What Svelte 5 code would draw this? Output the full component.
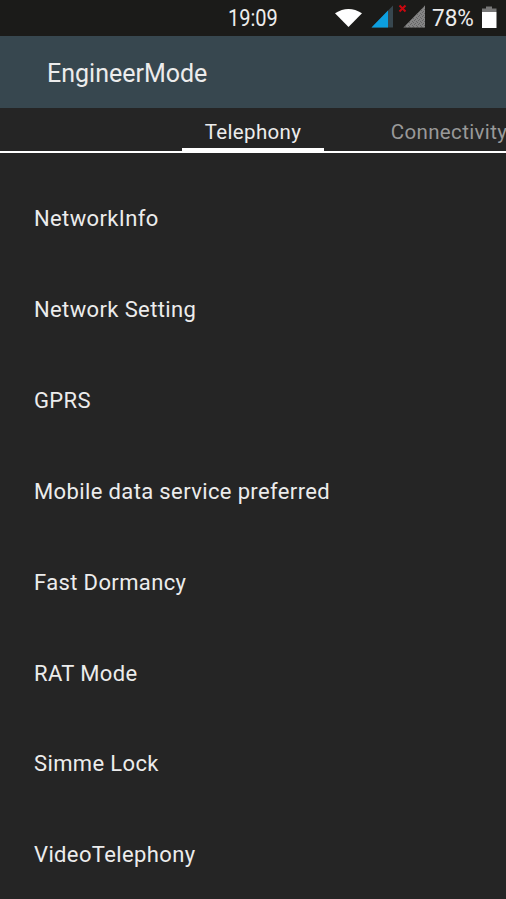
<script>
    let tabs = ["Telephony", "Connectivity"];
    let active = $state(0);

    let items = [
        "NetworkInfo",
        "Network Setting",
        "GPRS",
        "Mobile data service preferred",
        "Fast Dormancy",
        "RAT Mode",
        "Simme Lock",
        "VideoTelephony"
    ];
</script>

<div class="screen">
    <div class="status">
        <span class="clock">19:09</span>
        <svg class="icons" viewBox="0 0 96 36" aria-hidden="true">
            <defs>
                <pattern id="dots" width="4" height="4" patternUnits="userSpaceOnUse">
                    <path d="M0 0H1V1H0ZM2 1H3V2H2ZM1 3H2V4H1ZM3 2H4V3H3Z" fill="#656565" />
                </pattern>
            </defs>
            <path d="M1 13.300Q14.500 4.500 28 13.300L14.500 27Z" fill="#fff" />
            <path d="M59 5.500V27.500H37.500Z" fill="#37474f" />
            <path d="M54 10.600V27.500H37.500Z" fill="#0c9fe0" />
            <path d="M91 5.500V27.500H69.500Z" fill="#858585" />
            <path d="M91 5.500V27.500H69.500Z" fill="url(#dots)" />
            <path d="M65.500 5.500L71.500 11.500M71.500 5.500L65.500 11.500" stroke="#c80810" stroke-width="2" />
        </svg>
        <span class="percent">78%</span>
        <svg class="battery" viewBox="0 0 16 36" aria-hidden="true">
            <path d="M5 6.500H11V8.500H15.500V12H1V8.500H5Z" fill="#777" />
            <path d="M1 12H15.500V28H1Z" fill="#fff" />
        </svg>
    </div>

    <header>
        <h1>EngineerMode</h1>
    </header>

    <nav>
        {#each tabs as tab, i}
            <button class:active={active === i} onclick={() => (active = i)}>{tab}</button>
        {/each}
    </nav>

    <ul>
        {#each items as item}
            <li>{item}</li>
        {/each}
    </ul>
</div>

<style>
    :global(body) {
        margin: 0;
        background: #252525;
    }
    .screen {
        height: 899px;
        overflow: hidden;
        background-color: #252525;
        color: #ececec;
        font-family: Roboto, sans-serif;
    }
    .status {
        display: flex;
        align-items: center;
        height: 36px;
        background-color: #1b1b19;
    }
    .clock {
        width: 106px;
        margin-left: 228px;
        padding-top: 1px;
        font-size: 23px;
        transform: scaleX(0.87);
        transform-origin: left;
    }
    .icons {
        width: 96px;
        height: 36px;
    }
    .percent {
        width: 49px;
        margin-left: 2px;
        padding-top: 1px;
        font-size: 23px;
        transform: scaleX(0.98);
        transform-origin: left;
    }
    .battery {
        width: 16px;
        height: 36px;
    }
    header {
        display: flex;
        align-items: center;
        height: 70px;
        padding: 2px 0 0 47px;
        background-color: #37474f;
    }
    h1 {
        margin: 0;
        font-size: 25px;
        font-weight: 400;
    }
    nav {
        display: flex;
        height: 43px;
        padding-left: 182px;
        border-bottom: 2px solid #fff;
    }
    button {
        flex: none;
        width: 142px;
        margin-right: 54px;
        padding: 7px 0 0;
        border: 0;
        border-bottom: 3px solid transparent;
        background: none;
        color: #999;
        font: 20.500px Roboto, sans-serif;
        letter-spacing: 0.35px;
    }
    .active {
        border-color: #fff;
        color: #ececec;
    }
    ul {
        margin: 0;
        padding: 20.400px 0 0;
        list-style: none;
    }
    li {
        display: flex;
        align-items: center;
        height: 90.850px;
        padding-left: 34px;
        font-size: 22px;
        letter-spacing: 0.37px;
    }
</style>
